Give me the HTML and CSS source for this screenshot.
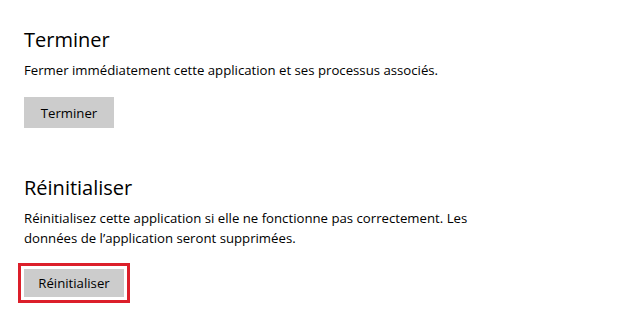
FILE: index.html
```html
<!DOCTYPE html>
<html lang="fr">
<head>
<meta charset="utf-8">
<link rel="stylesheet" href="styles.css">
</head>
<body>
<main class="page">
  <section class="section">
    <h2 class="title">Terminer</h2>
    <p class="desc">Fermer immédiatement cette application et ses processus associés.</p>
    <div class="action">
      <button class="btn">Terminer</button>
    </div>
  </section>
  <section class="section section-reset">
    <h2 class="title">Réinitialiser</h2>
    <p class="desc desc-wrap">Réinitialisez cette application si elle ne fonctionne pas correctement. Les données de l’application seront supprimées.</p>
    <div class="action action-reset">
      <span class="highlight"><button class="btn">Réinitialiser</button></span>
    </div>
  </section>
</main>
</body>
</html>
```
FILE: styles.css
```css
html, body {
  margin: 0;
  padding: 0;
  background: #ffffff;
}
body {
  font-family: "Open Sans", "Noto Sans", sans-serif;
  color: #000000;
  width: 640px;
  height: 322px;
  overflow: hidden;
}
.page {
  padding: 26px 24px 0 24px;
}
.section-reset {
  margin-top: 46px;
}
.title {
  margin: 0;
  font-size: 20px;
  font-weight: 400;
  line-height: 28px;
}
.desc {
  margin: 6px 0 0 0;
  font-size: 13.2px;
  line-height: 20px;
}
.desc-wrap {
  max-width: 455px;
}
.action {
  margin-top: 17px;
  display: flex;
}
.action-reset {
  margin-top: 15px;
}
.btn {
  font-family: inherit;
  font-size: 13.2px;
  color: #000;
  background: #cccccc;
  border: none;
  height: 31px;
  width: 90px;
  padding: 0;
  margin: 0;
}
.highlight {
  display: inline-flex;
  margin-left: -6px;
  padding: 3px;
  border: 3px solid #dc1f2a;
}
.highlight .btn {
  height: 28px;
  width: 100px;
}
```
